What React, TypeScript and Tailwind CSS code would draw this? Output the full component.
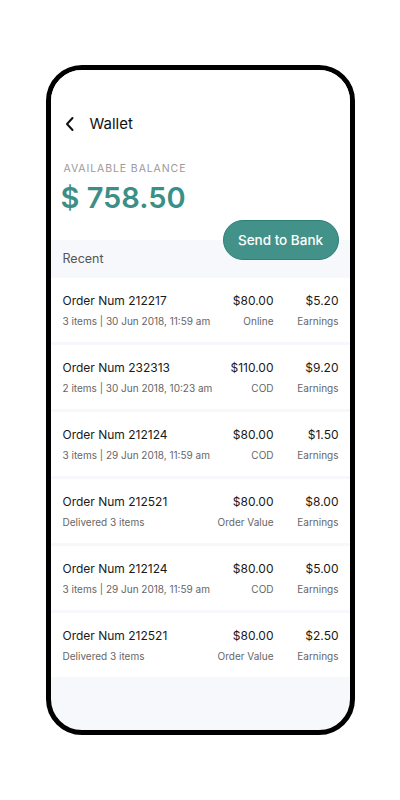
import React from 'react'

const orders = [
  { id: '212217', sub: '3 items | 30 Jun 2018, 11:59 am', amount: '$80.00', type: 'Online', earn: '$5.20' },
  { id: '232313', sub: '2 items | 30 Jun 2018, 10:23 am', amount: '$110.00', type: 'COD', earn: '$9.20' },
  { id: '212124', sub: '3 items | 29 Jun 2018, 11:59 am', amount: '$80.00', type: 'COD', earn: '$1.50' },
  { id: '212521', sub: 'Delivered 3 items', amount: '$80.00', type: 'Order Value', earn: '$8.00' },
  { id: '212124', sub: '3 items | 29 Jun 2018, 11:59 am', amount: '$80.00', type: 'COD', earn: '$5.00' },
  { id: '212521', sub: 'Delivered 3 items', amount: '$80.00', type: 'Order Value', earn: '$2.50' },
]

const App = () => {
  return (
    <div className="min-h-[800px] w-[400px] bg-white pt-[65px] font-['Inter',sans-serif]">
      <div className="mx-auto flex h-[670px] w-[309px] flex-col overflow-hidden rounded-[36px] border-[5px] border-black bg-[#f7f8fc]">
        {/* Header + balance */}
        <div className="bg-white pb-[5px]">
          <div className="flex h-[20px] items-center gap-[14px] pl-[13px] mt-[44px]">
            <svg width="12" height="16" viewBox="0 0 12 16" fill="none">
              <path d="M8.5 2 L3 8 L8.5 14" stroke="#111" strokeWidth="2" strokeLinecap="round" strokeLinejoin="round" />
            </svg>
            <div className="text-[15px] leading-[20px] text-[#111]">Wallet</div>
          </div>
          <div className="pl-[13px] pt-[28px] text-[10.5px] leading-[14px] tracking-[0.9px] text-[#9a9a9a]">
            AVAILABLE BALANCE
          </div>
          <div className="pl-[10px] pt-[5px] text-[29px] font-semibold leading-[34px] text-[#3b8f86]">
            $ 758.50
          </div>
        </div>
        {/* Button overlaps the top of the Recent band */}
        <div className="flex h-[20px] items-start justify-end bg-white pr-[11px]">
          <button className="relative z-10 h-[40px] w-[116px] shrink-0 rounded-full border border-[#2f7f77] bg-[#43928a] text-[13.5px] font-medium text-white">
            Send to Bank
          </button>
        </div>
        {/* Recent */}
        <div className="flex h-[38px] shrink-0 items-center pl-[12px] text-[12.5px] leading-[16px] text-[#555]">
          Recent
        </div>
        <div className="flex flex-col gap-[3px]">
          {orders.map((o, i) => (
            <div key={i} className="flex h-[64px] shrink-0 items-center bg-white pl-[12px] pr-[11px]">
              <div className="flex flex-1 flex-col gap-[7px]">
                <div className="text-[12px] leading-[15px] text-[#1a1a1a]">Order Num {o.id}</div>
                <div className="text-[10px] leading-[13px] text-[#666]">{o.sub}</div>
              </div>
              <div className="flex flex-col items-end gap-[7px]">
                <div className="text-[12px] leading-[15px] text-[#1a1a1a]">{o.amount}</div>
                <div className="text-[10px] leading-[13px] text-[#666]">{o.type}</div>
              </div>
              <div className="flex w-[65px] flex-col items-end gap-[7px]">
                <div className="text-[12px] leading-[15px] text-[#1a1a1a]">{o.earn}</div>
                <div className="text-[10px] leading-[13px] text-[#666]">Earnings</div>
              </div>
            </div>
          ))}
        </div>
      </div>
    </div>
  )
}

export default App
